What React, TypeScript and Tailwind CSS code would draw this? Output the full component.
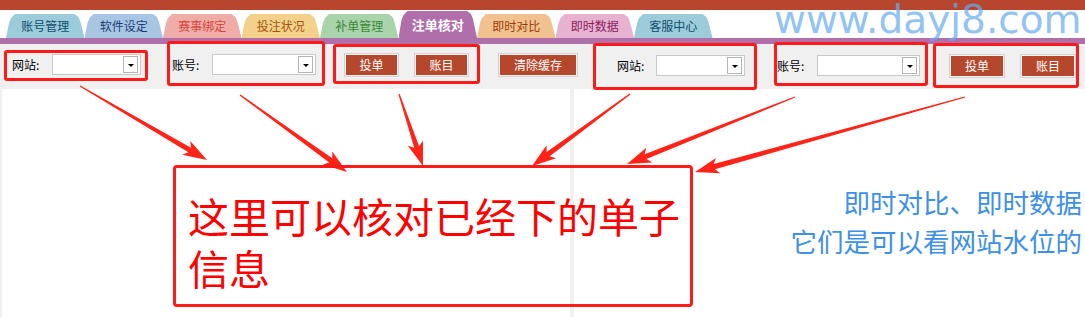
import React from 'react';

const tabs = [
  { label: '账号管理', cls: 'bg-[#9ccbd9] text-[#0f4f6e]' },
  { label: '软件设定', cls: 'bg-[#a8c5e2] text-[#1b3f78]' },
  { label: '赛事绑定', cls: 'bg-[#f0ada8] text-[#d4473f]' },
  { label: '投注状况', cls: 'bg-[#f3d18b] text-[#a4560c]' },
  { label: '补单管理', cls: 'bg-[#a9d3aa] text-[#3a8a3a]' },
  { label: '注单核对', cls: 'bg-[#b06eab] text-white', active: true },
  { label: '即时对比', cls: 'bg-[#f1c290] text-[#9c3f0c]' },
  { label: '即时数据', cls: 'bg-[#e6b2cf] text-[#8a1f5e]' },
  { label: '客服中心', cls: 'bg-[#9ccbd9] text-[#0f4f6e]' },
];

// arrows: [startX, startY, tipX, tipY]
const arrows: [number, number, number, number][] = [
  [80, 86, 207, 160],
  [240, 95, 347, 172],
  [399, 94, 423, 166],
  [630, 94, 532, 166],
  [795, 97, 627, 164],
  [965, 97, 695, 172],
];

function arrowPoints(x1: number, y1: number, x2: number, y2: number) {
  const dx = x2 - x1;
  const dy = y2 - y1;
  const len = Math.sqrt(dx * dx + dy * dy);
  const ux = dx / len;
  const uy = dy / len;
  const nx = -uy;
  const ny = ux;
  const headLen = 20;
  const headW = 8;
  const bx = x2 - ux * headLen;
  const by = y2 - uy * headLen;
  const cx = bx - ux * 4;
  const cy = by - uy * 4;
  const pts = [
    [x1 + nx * 0.6, y1 + ny * 0.6],
    [bx + nx * 2.6, by + ny * 2.6],
    [cx + nx * headW, cy + ny * headW],
    [x2, y2],
    [cx - nx * headW, cy - ny * headW],
    [bx - nx * 2.6, by - ny * 2.6],
    [x1 - nx * 0.6, y1 - ny * 0.6],
  ];
  return pts.map((p) => `${p[0].toFixed(1)},${p[1].toFixed(1)}`).join(' ');
}

function Select({ width }: { width: string }) {
  return (
    <div className={`${width} h-[21px] bg-white border border-[#c8c8c8] flex items-center justify-end pr-[2px]`}>
      <div className="w-[15px] h-[17px] border border-[#b4b4b4] bg-white flex items-center justify-center">
        <div className="w-0 h-0 border-l-[3px] border-r-[3px] border-t-[3px] border-l-transparent border-r-transparent border-t-black mt-[2px]" />
      </div>
    </div>
  );
}

function Btn({ label, width }: { label: string; width: string }) {
  return (
    <div className={`${width} h-[22px] bg-[#b5472d] border border-[#fbf4f2] outline outline-1 outline-[#d9cfcc] text-white text-[12px] flex items-center justify-center`}>
      {label}
    </div>
  );
}

export default function App() {
  return (
    <div
      className="relative w-[1085px] h-[317px] overflow-hidden bg-white"
      style={{ fontFamily: '"Noto Sans CJK SC", "Noto Sans", sans-serif' }}
    >
      <div className="h-[10px] bg-[#b7472c]" />

      {/* tabs */}
      <div className="h-[28px] flex items-end pl-[6px]">
        {tabs.map((t) => (
          <div
            key={t.label}
            className={`w-[78.5px] flex items-center justify-center ${t.cls} ${
              t.active ? 'h-[27px] text-[13px] font-bold' : 'h-[24px] text-[12px]'
            } [clip-path:polygon(0_100%,3px_9px,5px_4px,9px_0,calc(100%_-_10px)_0,calc(100%_-_6px)_3px,calc(100%_-_4px)_8px,100%_100%)]`}
          >
            {t.label}
          </div>
        ))}
      </div>
      <div className="h-[6px] bg-[#b06eab]" />

      {/* toolbar */}
      <div className="h-[45px] bg-[#f0f0f0] flex items-start pt-[10px] text-[12px] text-black">
        <span className="ml-[12px] w-[40px] leading-[21px]">网站:</span>
        <Select width="w-[89px]" />
        <span className="ml-[31px] w-[40px] leading-[21px]">账号:</span>
        <Select width="w-[104px]" />
        <div className="ml-[29px]">
          <Btn label="投单" width="w-[53px]" />
        </div>
        <div className="ml-[17px]">
          <Btn label="账目" width="w-[53px]" />
        </div>
        <div className="ml-[31px]">
          <Btn label="清除缓存" width="w-[78px]" />
        </div>
        <span className="ml-[40px] w-[39px] leading-[21px] mt-[1px]">网站:</span>
        <div className="mt-[1px]">
          <Select width="w-[89px]" />
        </div>
        <span className="ml-[32px] w-[40px] leading-[21px] mt-[1px]">账号:</span>
        <div className="mt-[1px]">
          <Select width="w-[103px]" />
        </div>
        <div className="ml-[30px] mt-[1px]">
          <Btn label="投单" width="w-[54px]" />
        </div>
        <div className="ml-[17px] mt-[1px]">
          <Btn label="账目" width="w-[54px]" />
        </div>
      </div>

      {/* panels */}
      <div className="h-[228px] bg-[#f0f0f0] flex pl-[2px] gap-[4px]">
        <div className="w-[568px] bg-white" />
        <div className="flex-1 bg-white" />
      </div>

      {/* watermark */}
      <div
        className="absolute top-0 left-[774px] text-[39px] leading-[39px] text-[#64aaf0] opacity-70 whitespace-nowrap"
        style={{ fontFamily: '"DejaVu Sans", sans-serif' }}
      >
        www.dayj8.com
      </div>

      {/* annotation boxes */}
      <div className="absolute left-[4px] top-[50px] w-[144px] h-[31px] border-[3px] border-[#ff1a1a] rounded-[3px]" />
      <div className="absolute left-[167px] top-[41px] w-[158px] h-[45px] border-[3px] border-[#ff1a1a] rounded-[3px]" />
      <div className="absolute left-[333px] top-[44px] w-[147px] h-[40px] border-[3px] border-[#ff1a1a] rounded-[3px]" />
      <div className="absolute left-[593px] top-[43px] w-[164px] h-[47px] border-[3px] border-[#ff1a1a] rounded-[3px]" />
      <div className="absolute left-[774px] top-[42px] w-[154px] h-[44px] border-[3px] border-[#ff1a1a] rounded-[3px]" />
      <div className="absolute left-[933px] top-[43px] w-[146px] h-[45px] border-[3px] border-[#ff1a1a] rounded-[3px]" />

      <svg className="absolute left-0 top-0 pointer-events-none" width="1085" height="317">
        {arrows.map((a, i) => (
          <polygon key={i} points={arrowPoints(a[0], a[1], a[2], a[3])} fill="#ff2318" />
        ))}
      </svg>

      {/* callout */}
      <div className="absolute left-[173px] top-[165px] w-[520px] h-[142px] border-[3px] border-[#ff1a1a] rounded-[4px] pl-[12px] pt-[21px] text-[41px] leading-[52px] text-[#ff0000] whitespace-nowrap">
        这里可以核对已经下的单子
        <br />
        信息
      </div>

      <div className="absolute right-[3px] top-[182px] text-right text-[26.5px] leading-[39px] text-[#3d8fe9] whitespace-nowrap">
        即时对比、即时数据
        <br />
        它们是可以看网站水位的
      </div>
    </div>
  );
}
